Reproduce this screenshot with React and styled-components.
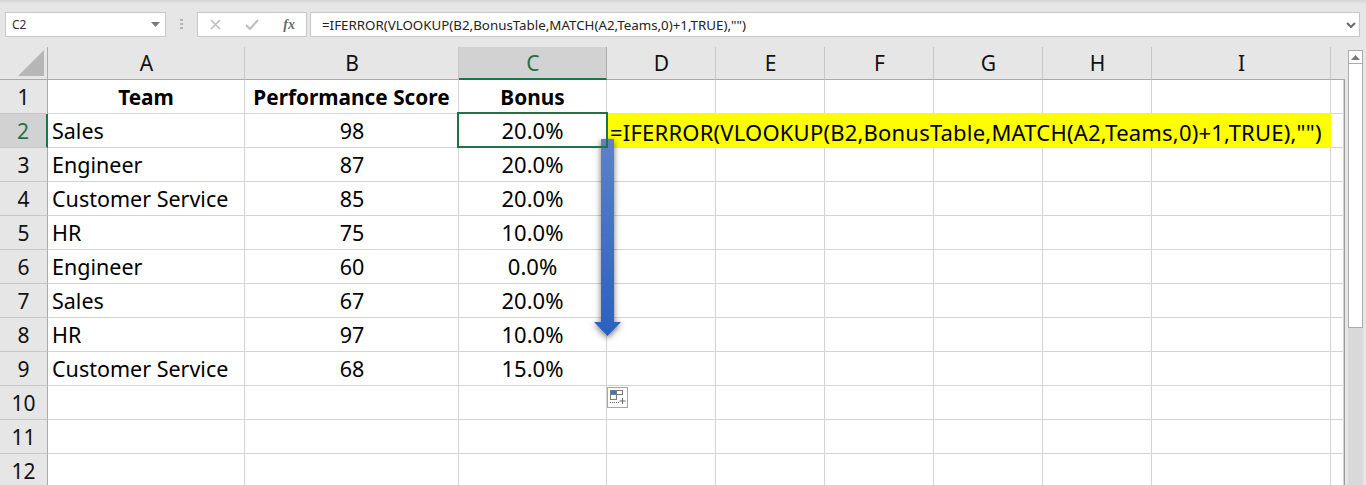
import React from "react";
import styled, { createGlobalStyle } from "styled-components";

const GlobalStyle = createGlobalStyle`
  html, body {
    margin: 0;
    padding: 0;
    height: 485px;
    overflow: hidden;
    background: #e6e6e6;
  }
`;

const Page = styled.div`
  width: 1366px;
  height: 485px;
  overflow: hidden;
  background: #e6e6e6;
  font-family: "Noto Sans", "Open Sans", sans-serif;
  color: #000;
`;

// Formula bar
const FormulaBar = styled.div`
  height: 47px;
  box-sizing: border-box;
  padding: 12px 6px 0 5px;
  display: flex;
  align-items: flex-start;
  background: linear-gradient(#d4d4d4 0, #e6e6e6 4px);
`;

const NameBox = styled.div`
  width: 161px;
  height: 25px;
  box-sizing: border-box;
  border: 1px solid #c8c8c8;
  background: #fff;
  display: flex;
  align-items: center;
  justify-content: space-between;
  padding: 0 5px 0 6px;
  font-size: 12px;
  color: #333;
`;

const Dots = styled.div`
  width: 31px;
  height: 25px;
  display: flex;
  align-items: center;
  justify-content: center;
`;

const ButtonBox = styled.div`
  width: 110px;
  height: 25px;
  box-sizing: border-box;
  border: 1px solid #c8c8c8;
  background: #fff;
  display: flex;
  align-items: center;
  justify-content: space-between;
  padding: 0 11px 0 12px;
  margin-right: 3px;
`;

const FormulaInput = styled.div`
  flex: 1;
  height: 25px;
  box-sizing: border-box;
  border: 1px solid #c8c8c8;
  background: #fff;
  display: flex;
  align-items: center;
  justify-content: space-between;
  padding: 0 3px 0 11px;
  font-size: 13.33px;
  color: #222;
`;

const FxLabel = styled.span`
  font-family: "Liberation Serif", serif;
  font-style: italic;
  font-weight: 700;
  font-size: 14px;
  color: #6b6b6b;
`;

// Sheet
const SheetRow = styled.div`
  display: flex;
  height: 438px;
`;

const Grid = styled.div`
  width: 1345px;
  flex: none;
  display: grid;
  grid-template-columns: 48px 197px 214px 148px repeat(5, 109px) 179px 13px;
  grid-template-rows: 33px repeat(12, 34px);
  background: #fff;
  border-right: 1px solid #9c9c9c;
  box-sizing: border-box;
`;

const Corner = styled.div`
  background: #e6e6e6;
  border-right: 1px solid #ababab;
  border-bottom: 1px solid #ababab;
  display: flex;
  align-items: flex-end;
  justify-content: flex-end;
  padding: 0 3px 3px 0;
`;

const ColHead = styled.div`
  background: ${(p) => (p.$active ? "#d2d2d2" : "#e6e6e6")};
  color: ${(p) => (p.$active ? "#217346" : "#111")};
  border-right: 1px solid ${(p) => (p.$active ? "#ababab" : "#c6c6c6")};
  border-bottom: ${(p) => (p.$active ? "2px solid #217346" : "1px solid #ababab")};
  display: flex;
  align-items: center;
  justify-content: center;
  font-size: 21px;
  line-height: 1;
  padding: 1px 0 0 1px;
  box-sizing: border-box;
`;

// Blank header above the sliver of column J, runs over the sheet's right edge
const ColHeadEnd = styled.div`
  background: #e6e6e6;
  border-bottom: 1px solid #ababab;
  margin-right: -1px;
  box-sizing: border-box;
`;

const RowHead = styled.div`
  background: ${(p) => (p.$active ? "#d2d2d2" : "#e6e6e6")};
  color: ${(p) => (p.$active ? "#217346" : "#111")};
  border-right: ${(p) => (p.$active ? "2px solid #217346" : "1px solid #ababab")};
  border-bottom: 1px solid #c6c6c6;
  display: flex;
  align-items: center;
  justify-content: center;
  font-size: 21px;
  box-sizing: border-box;
`;

const Cell = styled.div`
  position: relative;
  border-right: 1px solid #d4d4d4;
  border-bottom: 1px solid #d4d4d4;
  box-sizing: border-box;
  display: flex;
  align-items: center;
  justify-content: ${(p) => (p.$left ? "flex-start" : "center")};
  padding-left: ${(p) => (p.$left ? "4px" : p.$nudge ? "1px" : "0")};
  padding-bottom: ${(p) => (p.$percent ? "2px" : "0")};
  font-size: ${(p) => (p.$bold ? "20.8px" : p.$percent ? "22px" : "21.5px")};
  font-weight: ${(p) => (p.$bold ? 700 : 400)};
  white-space: nowrap;
`;

const FormulaCell = styled.div`
  grid-column: span 6;
  background: #ffff00;
  display: flex;
  align-items: center;
  margin-top: -1px;
  padding: 2px 0 0 3px;
  font-size: 22px;
  letter-spacing: 0.2px;
  white-space: nowrap;
  height: 35px;
  box-sizing: border-box;
  position: relative;
  z-index: 1;
`;

const SelectionFrame = styled.div`
  position: absolute;
  left: -2px;
  top: -2px;
  right: -2px;
  bottom: -1px;
  border: 2px solid #217346;
  z-index: 2;
`;

const Arrow = styled.svg`
  position: absolute;
  left: -13px;
  top: 26px;
  z-index: 3;
  overflow: visible;
`;

const PasteOptions = styled.svg`
  position: absolute;
  left: 0;
  top: 1px;
  z-index: 3;
`;

// Scroll bar
const ScrollBar = styled.div`
  width: 15px;
  margin-left: 3px;
  margin-top: 3px;
  display: flex;
  flex-direction: column;
  background: #d9d9d9;
`;

const ScrollUp = styled.div`
  height: 14px;
  background: #fff;
  border: 1px solid #ababab;
  box-sizing: border-box;
  display: flex;
  align-items: center;
  justify-content: center;
`;

const ScrollThumb = styled.div`
  height: 264px;
  background: #fff;
  border: 1px solid #ababab;
  border-top: none;
  box-sizing: border-box;
`;

const columns = ["A", "B", "C", "D", "E", "F", "G", "H", "I"];

const rows = [
  ["Sales", "98", "20.0%"],
  ["Engineer", "87", "20.0%"],
  ["Customer Service", "85", "20.0%"],
  ["HR", "75", "10.0%"],
  ["Engineer", "60", "0.0%"],
  ["Sales", "67", "20.0%"],
  ["HR", "97", "10.0%"],
  ["Customer Service", "68", "15.0%"],
];

const FORMULA = '=IFERROR(VLOOKUP(B2,BonusTable,MATCH(A2,Teams,0)+1,TRUE),"")';

const EmptyCells = ({ count }) =>
  Array.from({ length: count }, (_, i) => <Cell key={i} />);

const DownArrow = () => (
  <Arrow width="28" height="198" viewBox="0 0 28 198">
    <defs>
      <linearGradient id="arrowFill" x1="0" y1="0" x2="0" y2="1">
        <stop offset="0" stopColor="#5f80c8" />
        <stop offset="1" stopColor="#2a60bf" />
      </linearGradient>
      <filter id="arrowShadow" x="-60%" y="-5%" width="220%" height="110%">
        <feDropShadow dx="0" dy="2" stdDeviation="3" floodColor="#000" floodOpacity="0.55" />
      </filter>
    </defs>
    <path
      d="M7 0H20V183H27L13.5 197L0 183H7Z"
      fill="url(#arrowFill)"
      filter="url(#arrowShadow)"
    />
  </Arrow>
);

const PasteIcon = () => (
  <PasteOptions width="21" height="21" viewBox="0 0 21 21">
    <rect x="0.5" y="0.5" width="20" height="20" fill="#fff" stroke="#a6a6a6" />
    <rect x="3.5" y="3.5" width="6" height="4" fill="#3f6fd8" stroke="#7a7a7a" />
    <rect x="9.5" y="3.5" width="6" height="4" fill="#fff" stroke="#7a7a7a" />
    <rect x="3.5" y="7.5" width="6" height="5" fill="#fff" stroke="#7a7a7a" />
    <path d="M3 15.5h1M5 15.5h1M7 15.5h1M9 15.5h1M11 15.5h1" stroke="#666" />
    <path d="M15.5 11v6M12.5 14h6" stroke="#666" />
  </PasteOptions>
);

export default function App() {
  return (
    <Page>
      <GlobalStyle />
      <FormulaBar>
        <NameBox>
          C2
          <svg width="9" height="5" viewBox="0 0 9 5">
            <path d="M0 0H9L4.5 5Z" fill="#7a7a7a" />
          </svg>
        </NameBox>
        <Dots>
          <svg width="3" height="11" viewBox="0 0 3 11">
            <path d="M0 0h3v2H0zM0 4h3v2H0zM0 8h3v2H0z" fill="#b5b5b5" />
          </svg>
        </Dots>
        <ButtonBox>
          <svg width="11" height="11" viewBox="0 0 11 11">
            <path d="M1 1L10 10M10 1L1 10" stroke="#bdbdbd" strokeWidth="1.6" fill="none" />
          </svg>
          <svg width="14" height="11" viewBox="0 0 14 11">
            <path d="M1 6L5 10L13 1" stroke="#bdbdbd" strokeWidth="2" fill="none" />
          </svg>
          <FxLabel>fx</FxLabel>
        </ButtonBox>
        <FormulaInput>
          {FORMULA}
          <svg width="10" height="6" viewBox="0 0 10 6">
            <path d="M1 1L5 5L9 1" stroke="#6b6b6b" strokeWidth="2" fill="none" />
          </svg>
        </FormulaInput>
      </FormulaBar>

      <SheetRow>
        <Grid>
          <Corner>
            <svg width="26" height="26" viewBox="0 0 26 26">
              <path d="M0 26H26V0Z" fill="#b6b6b6" />
            </svg>
          </Corner>
          {columns.map((c) => (
            <ColHead key={c} $active={c === "C"}>{c}</ColHead>
          ))}
          <ColHeadEnd />

          <RowHead>1</RowHead>
          <Cell $bold>Team</Cell>
          <Cell $bold>Performance Score</Cell>
          <Cell $bold>Bonus</Cell>
          <EmptyCells count={7} />

          {rows.map((r, i) => {
            const first = i === 0;
            return (
              <React.Fragment key={i}>
                <RowHead $active={first}>{i + 2}</RowHead>
                <Cell $left>{r[0]}</Cell>
                <Cell $nudge>{r[1]}</Cell>
                <Cell $percent>
                  {r[2]}
                  {first && <SelectionFrame />}
                </Cell>
                {first ? (
                  <>
                    <FormulaCell>
                      {FORMULA}
                      <DownArrow />
                    </FormulaCell>
                    <Cell />
                  </>
                ) : (
                  <EmptyCells count={7} />
                )}
              </React.Fragment>
            );
          })}

          <RowHead>10</RowHead>
          <EmptyCells count={3} />
          <Cell>
            <PasteIcon />
          </Cell>
          <EmptyCells count={6} />

          <RowHead>11</RowHead>
          <EmptyCells count={10} />
          <RowHead>12</RowHead>
          <EmptyCells count={10} />
        </Grid>
        <ScrollBar>
          <ScrollUp>
            <svg width="9" height="5" viewBox="0 0 9 5">
              <path d="M0 5H9L4.5 0Z" fill="#7a7a7a" />
            </svg>
          </ScrollUp>
          <ScrollThumb />
        </ScrollBar>
      </SheetRow>
    </Page>
  );
}
